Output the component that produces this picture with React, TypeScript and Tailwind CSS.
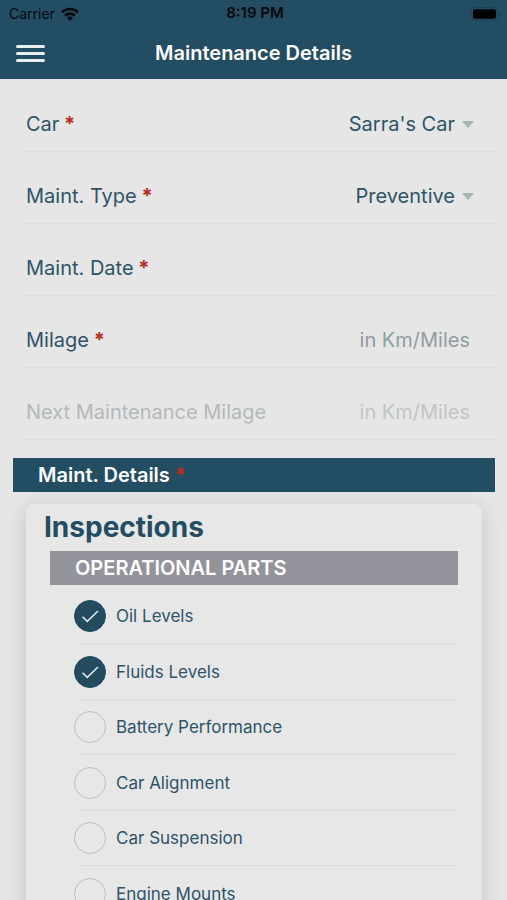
import { useState } from "react";
import type { ReactNode } from "react";

const parts = [
  "Oil Levels",
  "Fluids Levels",
  "Battery Performance",
  "Car Alignment",
  "Car Suspension",
  "Engine Mounts",
];

function WifiIcon() {
  return (
    <svg viewBox="0 0 18 14" className="h-3.5 w-[18px]" aria-hidden="true">
      <g fill="none" stroke="#06090c" strokeWidth="2.6">
        <path d="M1 5.2a11.6 11.6 0 0 1 16 0" />
        <path d="M4 8.6a7.2 7.2 0 0 1 10 0" />
      </g>
      <path d="M9 13.8 5.8 10.9a4.6 4.6 0 0 1 6.4 0Z" fill="#06090c" />
    </svg>
  );
}

function BatteryIcon() {
  return (
    <svg viewBox="0 0 30 14" className="h-3.5 w-[30px]" aria-hidden="true">
      <rect x="0.5" y="0.5" width="26" height="13" rx="4" fill="none" stroke="#1d4256" />
      <rect x="2" y="2.2" width="23" height="9.6" rx="2.4" fill="#000" />
      <path d="M28 4.5c2 .8 2 4.2 0 5Z" fill="#1d4256" />
    </svg>
  );
}

function Required() {
  return <span className="font-bold text-[#b92d20]"> *</span>;
}

function Field({
  id,
  label,
  required,
  disabled,
  children,
}: {
  id: string;
  label: string;
  required?: boolean;
  disabled?: boolean;
  children: ReactNode;
}) {
  return (
    <div className="ml-6 mr-3 flex h-[72px] items-center justify-between border-b border-[#dcdddd] pt-[17px] pl-0.5">
      <label
        htmlFor={id}
        className={
          disabled
            ? "shrink-0 text-[20px] leading-6 text-[#b3b9bb]"
            : "shrink-0 text-[20px] leading-6 text-[#2d5468]"
        }
      >
        {label}
        {required && <Required />}
      </label>
      {children}
    </div>
  );
}

function SelectField({ id, label, options }: { id: string; label: string; options: string[] }) {
  return (
    <Field id={id} label={label} required>
      <span className="flex items-center gap-[7px] pr-[21px]">
        <select
          id={id}
          required
          className="appearance-none bg-transparent text-right text-[20px] leading-6 text-[#2d5468] outline-none [field-sizing:content]"
        >
          {options.map((option) => (
            <option key={option}>{option}</option>
          ))}
        </select>
        <svg viewBox="0 0 12 7" className="h-[7px] w-3" aria-hidden="true">
          <path d="M0 0h12L6 7Z" fill="#a9b2b4" />
        </svg>
      </span>
    </Field>
  );
}

function PartRow({ name, initial }: { name: string; initial: boolean }) {
  const [checked, setChecked] = useState(initial);
  return (
    <li className="h-14 border-b border-[#dcdddd] odd:h-[55px]">
      <label className="-ml-0.5 flex h-full items-center gap-2.5">
        <span className="grid size-8 shrink-0">
          <input
            type="checkbox"
            checked={checked}
            onChange={(event) => setChecked(event.target.checked)}
            className="col-start-1 row-start-1 size-8 appearance-none rounded-full border-[1.5px] border-[#bcbebf] checked:border-[#234b60] checked:bg-[#234b60]"
          />
          {checked && (
            <svg
              viewBox="0 0 32 32"
              className="pointer-events-none col-start-1 row-start-1 size-8"
              aria-hidden="true"
            >
              <path d="M8.5 16.8 13.3 21.4 24 11" fill="none" stroke="#dfe9ee" strokeWidth="1.5" />
            </svg>
          )}
        </span>
        <span className="text-[17px] leading-6 text-[#2d5468]">{name}</span>
      </label>
    </li>
  );
}

export default function App() {
  return (
    <div className="flex h-screen flex-col overflow-hidden bg-[#e6e6e6] font-['Inter','Liberation_Sans',sans-serif]">
      <header className="shrink-0 bg-[#234d62]">
        <div className="grid h-[27px] grid-cols-3 items-center pr-1.5 pl-[9px] text-[14px] text-[#06090c]">
          <span className="flex items-center gap-1.5">
            Carrier
            <WifiIcon />
          </span>
          <span className="text-center text-[15px] font-semibold">8:19 PM</span>
          <span className="flex justify-end">
            <BatteryIcon />
          </span>
        </div>
        <div className="grid h-[52px] grid-cols-[1fr_auto_1fr] items-center px-4">
          <button type="button" aria-label="Menu" className="flex w-[29px] flex-col gap-1">
            <span className="h-[3px] rounded-full bg-[#e9eef1]" />
            <span className="h-[3px] rounded-full bg-[#e9eef1]" />
            <span className="h-[3px] rounded-full bg-[#e9eef1]" />
          </button>
          <h1 className="text-[20px] leading-6 font-semibold text-white">Maintenance Details</h1>
        </div>
      </header>

      <main className="min-h-0 flex-1 overflow-y-auto pt-px [scrollbar-width:none]">
        <form>
          <SelectField id="car" label="Car" options={["Sarra's Car"]} />
          <SelectField id="type" label="Maint. Type" options={["Preventive", "Corrective"]} />
          <Field id="date" label="Maint. Date" required>
            <input
              id="date"
              type="text"
              required
              className="w-40 bg-transparent pr-[25px] text-right text-[20px] leading-6 text-[#2d5468] outline-none"
            />
          </Field>
          <Field id="milage" label="Milage" required>
            <input
              id="milage"
              type="text"
              inputMode="numeric"
              required
              placeholder="in Km/Miles"
              className="w-40 bg-transparent pr-[25px] text-right text-[20px] leading-6 text-[#2d5468] outline-none placeholder:text-[#909ca2]"
            />
          </Field>
          <Field id="next" label="Next Maintenance Milage" disabled>
            <input
              id="next"
              type="text"
              disabled
              placeholder="in Km/Miles"
              className="w-40 bg-transparent pr-[25px] text-right text-[20px] leading-6 outline-none placeholder:text-[#c1c5c7]"
            />
          </Field>

          <h2 className="mt-[18px] mr-3 ml-[13px] flex h-[34px] items-center bg-[#234d62] pl-[25px] text-[20px] font-semibold whitespace-pre text-white">
            Maint. Details
            <Required />
          </h2>

          <section className="mt-3 mr-[25px] ml-[26px] rounded-lg bg-[#e7e7e7] px-6 pb-8 shadow-[0_3px_20px_rgba(0,0,0,0.15)]">
            <h3 className="-ml-1.5 pt-[3px] pb-1 text-[28px] leading-10 font-bold text-[#234d62]">
              Inspections
            </h3>
            <h4 className="flex h-[34px] items-center bg-[#93939c] pl-[25px] text-[20px] font-semibold text-white">
              OPERATIONAL PARTS
            </h4>
            <ul className="mt-1 ml-[26px]">
              {parts.map((name, index) => (
                <PartRow key={name} name={name} initial={index < 2} />
              ))}
            </ul>
          </section>
        </form>
      </main>
    </div>
  );
}
